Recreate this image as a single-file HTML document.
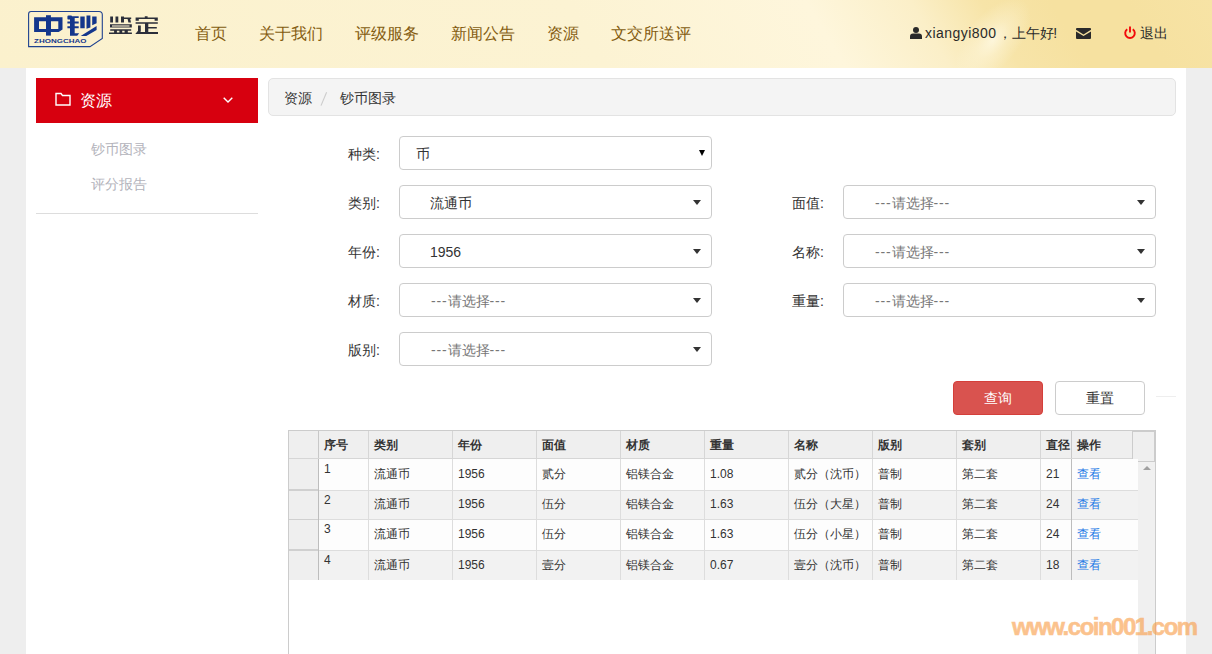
<!DOCTYPE html>

<html><head><meta charset="utf-8"/>
<style>
*{box-sizing:border-box;margin:0;padding:0}
html,body{width:1212px;height:654px;overflow:hidden}
body{background:#eeeeee;font-family:"Liberation Sans",sans-serif;color:#333;position:relative;font-size:14px}
.abs{position:absolute;white-space:nowrap}
body div,body span{white-space:nowrap}
#hdr{position:absolute;left:0;top:0;width:1212px;height:68px;overflow:hidden;
 background:linear-gradient(59deg,#fbf1cd 0px,#fcf3d3 520px,#fef6dc 725px,#fbefc8 815px,#f7e4a8 875px,#f6e1a0 935px,#f6e1a0 1000px,#f7e3a5 1074px)}
#glow{position:absolute;left:933px;top:-15px;width:120px;height:110px;transform:rotate(-50deg);
 background:radial-gradient(ellipse 50px 26px at 60px 55px, rgba(255,250,230,.8), rgba(255,250,230,.35) 45%, rgba(255,250,230,0))}
#wrap{position:absolute;left:26px;top:68px;width:1160px;height:586px;background:#fff}
.nav{position:absolute;top:23px;font-size:16px;color:#845c10;line-height:22px}
#side{position:absolute;left:36px;top:78px;width:222px;height:45px;background:#d7000f}
.sub{position:absolute;left:91px;font-size:14px;color:#b3b3bb;line-height:20px}
#bc{position:absolute;left:268px;top:78px;width:908px;height:38px;background:#f4f4f4;border:1px solid #e3e3e3;border-radius:5px}
.lbl{position:absolute;font-size:14px;color:#333;line-height:20px}
.sel{position:absolute;width:313px;height:34px;border:1px solid #ccc;border-radius:4px;background:#fff}
.sel span{position:absolute;left:30px;top:7px;font-size:14px;line-height:20px;color:#333}
.sel span.ph{color:#777}
.sel span.ph{letter-spacing:0}
.sel i{position:absolute;right:10px;top:14px;width:0;height:0;border-left:4px solid transparent;border-right:4px solid transparent;border-top:5px solid #333}
.btn{position:absolute;top:381px;width:90px;height:34px;border-radius:4px;font-size:14px;text-align:center;line-height:33px}
#grid{position:absolute;left:288px;top:430px;width:868px;height:230px;border:1px solid #ccc;border-bottom:none;background:#fff}
.hc{position:absolute;top:0;height:28px;background:#efefef;border-right:1px solid #d3d3d3;border-bottom:1px solid #d3d3d3;font-weight:bold;font-size:12px;line-height:18px;padding:9px 0 0 5px}
.row{position:absolute;left:0;width:849px}
.hd{font-size:12px;font-weight:bold;line-height:18px;color:#333}
.td{font-size:12px;line-height:18px;color:#333}
.lk{color:#1e7ae6}
.c{position:absolute;top:0;height:100%;border-right:1px solid #ddd;border-bottom:1px solid #ddd;font-size:12px;padding-left:6px}
</style></head><body>
<div id="hdr">
<div id="glow"></div>
<!-- logo -->
<svg class="abs" height="55" style="left:0;top:0" viewbox="0 0 170 55" width="170">
<path d="M31 11.5 H99 Q102.3 11.5 102.3 14.8 V38.4 L90 46.6 H28.6 V13.9 Q28.6 11.5 31 11.5 Z" fill="none" stroke="#1f4290" stroke-width="1.1"></path>
<path d="M34.1 17.3H62.5V29.4L58.7 32.1H34.1ZM39 21.2H46V29H39ZM50.9 21.2H58.3V29H50.9Z" fill="#14378c" fill-rule="evenodd"></path><path d="M46 15.2H50.9V35.6H46Z" fill="#14378c"></path>
<path d="M67.4 16.6 Q67.4 15.4 68.6 15.4 H71 Q72 15.4 72 16.2 H78.7 V18 H72 V18.8 Q72 19.6 71 19.6 H68.6 Q67.4 19.6 67.4 18.4ZM67.4 21.5H78.7V23.5H67.4ZM67.4 26.3H78.7V28.3H67.4ZM70 18H74.7V35.7H70ZM74.7 33.2 H79.2 L77.2 35.7 H74.7ZM80.3 16.4H84.7V28.3H80.3ZM86.5 15.4 H90.4 V27.6 L86.5 28.7ZM92.2 16.4 H96.6 V23.3 L92.2 25.2ZM96.6 25.9 V29.9 L86.3 35.9 H80.7Z" fill="#14378c"></path>
<text fill="#14378c" font-family="Liberation Sans" font-size="5.6" font-weight="bold" lengthadjust="spacingAndGlyphs" textlength="52.3" x="34.1" y="42.8">ZHONGCHAO</text>
<path d="M110.2 16.6H113V22.4H110.2ZM115.5 16.6H118.3V22.4H115.5ZM121 16.4 H124 V17.5 H131.2 V19 H124 V22.4 H121ZM127.6 19 H130.2 L131 22.4 H128.4ZM110 24.3H131.8V27.5H110ZM110.2 29.3H131.2V30.8H110.2ZM114.1 30.8H116.9V32.8H114.1ZM119.4 30.8H122.2V32.8H119.4ZM124.6 30.8H127.8V32.8H124.6ZM109 32.6H131.9V34H109Z" fill="#2b2e3a"></path><path d="M112 25.4H129.5V26.6H112Z" fill="#f0e6c8"></path>
<path d="M144.8 16.2H147.6V17.8H144.8ZM135.6 17.5H157.8V19H135.6ZM135.6 17.5H138.8V20.8H135.6ZM154.6 17.5H157.8V20.8H154.6ZM135.6 22.2H157.8V23.8H135.6ZM145 23.8H148.3V33.5H145ZM148.3 27H156.8V28.6H148.3ZM138 25.4 H140.8 V31.4 L138 34 H135.3 L138 30.8ZM138.4 32.1H158V34H138.4Z" fill="#2b2e3a"></path>
</svg>
<div class="nav" style="left:195px;width:32.00px;text-align-last:justify">首页</div>
<div class="nav" style="left:259px;width:64.00px;text-align-last:justify">关于我们</div>
<div class="nav" style="left:355px;width:64.00px;text-align-last:justify">评级服务</div>
<div class="nav" style="left:451px;width:64.00px;text-align-last:justify">新闻公告</div>
<div class="nav" style="left:547px;width:32.00px;text-align-last:justify">资源</div>
<div class="nav" style="left:611px;width:80.00px;text-align-last:justify">文交所送评</div>
<svg class="abs" height="12" style="left:910px;top:27px" viewbox="0 0 12 12" width="12"><circle cx="6" cy="3" fill="#2a2a2a" r="3"></circle><path d="M0 12 V9.5 Q0 6.5 3 6.5 H9 Q12 6.5 12 9.5 V12 Z" fill="#2a2a2a"></path></svg>
<div class="abs" style="left:925px;top:23px;font-size:14px;line-height:20px;color:#2a2a2a;letter-spacing:.45px">xiangyi800</div>
<div class="abs" style="left:997.5px;top:23px;font-size:14px;line-height:20px;color:#2a2a2a;width:56.00px;text-align-last:justify">，上午好</div>
<div class="abs" style="left:1053.3px;top:23px;font-size:14px;line-height:20px;color:#2a2a2a">!</div>
<svg class="abs" height="11" style="left:1076px;top:28px" viewbox="0 0 15 11" width="15"><path d="M0 1 Q0 0 1 0 H14 Q15 0 15 1 V1.8 L7.5 6.5 L0 1.8 Z" fill="#2a2a2a"></path><path d="M0 3.5 L7.5 8 L15 3.5 V10 Q15 11 14 11 H1 Q0 11 0 10 Z" fill="#2a2a2a"></path></svg>
<svg class="abs" height="13" style="left:1124px;top:26px" viewbox="0 0 12 13" width="12"><path d="M3.2 3.3 A4.8 4.8 0 1 0 8.8 3.3" fill="none" stroke="#f20a0a" stroke-width="1.9"></path><path d="M6 0.5 V6.5" stroke="#f20a0a" stroke-width="1.9"></path></svg>
<div class="abs" style="left:1140px;top:23px;font-size:14px;line-height:20px;color:#2a2a2a;width:28.00px;text-align-last:justify">退出</div>
</div>
<div id="wrap"></div>
<div id="side">
<svg class="abs" height="14" style="left:19px;top:14px" viewbox="0 0 16 14" width="16"><path d="M1 1.5 H6 L7.5 3.5 H15 V13 H1 Z" fill="none" stroke="#fff" stroke-width="1.4"></path></svg>
<div class="abs" style="left:44px;top:12px;font-size:16px;color:#fff;line-height:22px;width:32.00px;text-align-last:justify">资源</div>
<svg class="abs" height="6" style="left:187px;top:19px" viewbox="0 0 10 6" width="10"><path d="M0.7 0.7 L5 5 L9.3 0.7" fill="none" stroke="#fff" stroke-width="1.4"></path></svg>
</div>
<div class="sub" style="top:139px;width:56.00px;text-align-last:justify">钞币图录</div>
<div class="sub" style="top:174px;width:56.00px;text-align-last:justify">评分报告</div>
<div class="abs" style="left:36px;top:213px;width:222px;height:1px;background:#ddd"></div>
<div id="bc">
<div class="abs" style="left:15px;top:9px;font-size:14px;line-height:20px;color:#333;width:28.00px;text-align-last:justify">资源</div>
<svg class="abs" height="16" style="left:49px;top:12px" viewbox="0 0 12 16" width="12"><path d="M8.6 1.2 L3 14.6" stroke="#ccc" stroke-width="1.1"></path></svg>
<div class="abs" style="left:71px;top:9px;font-size:14px;line-height:20px;color:#333;width:56.00px;text-align-last:justify">钞币图录</div>
</div>
<!-- form -->
<div class="lbl" style="left:348px;top:144px;width:31.89px;text-align-last:justify">种类:</div>
<div class="sel" style="left:399px;top:136px"><span style="left:16px;width:14.00px;text-align-last:justify">币</span><i style="right:6px;top:13px;border-left-width:3px;border-right-width:3px;border-top-width:6px;border-top-color:#000"></i></div>
<div class="lbl" style="left:348px;top:193px;width:31.89px;text-align-last:justify">类别:</div>
<div class="sel" style="left:399px;top:185px"><span style="width:42.00px;text-align-last:justify">流通币</span><i></i></div>
<div class="lbl" style="left:348px;top:242px;width:31.89px;text-align-last:justify">年份:</div>
<div class="sel" style="left:399px;top:234px"><span>1956</span><i></i></div>
<div class="lbl" style="left:348px;top:291px;width:31.89px;text-align-last:justify">材质:</div>
<div class="sel" style="left:399px;top:283px"><span class="ph" style="left:31px;letter-spacing:.8px">---</span><span class="ph" style="left:48px;width:42.00px;text-align-last:justify">请选择</span><span class="ph" style="left:89.5px;letter-spacing:.8px">---</span><i></i></div>
<div class="lbl" style="left:348px;top:340px;width:31.89px;text-align-last:justify">版别:</div>
<div class="sel" style="left:399px;top:332px"><span class="ph" style="left:31px;letter-spacing:.8px">---</span><span class="ph" style="left:48px;width:42.00px;text-align-last:justify">请选择</span><span class="ph" style="left:89.5px;letter-spacing:.8px">---</span><i></i></div>
<div class="lbl" style="left:792px;top:193px;width:31.89px;text-align-last:justify">面值:</div>
<div class="sel" style="left:843px;top:185px"><span class="ph" style="left:31px;letter-spacing:.8px">---</span><span class="ph" style="left:48px;width:42.00px;text-align-last:justify">请选择</span><span class="ph" style="left:89.5px;letter-spacing:.8px">---</span><i></i></div>
<div class="lbl" style="left:792px;top:242px;width:31.89px;text-align-last:justify">名称:</div>
<div class="sel" style="left:843px;top:234px"><span class="ph" style="left:31px;letter-spacing:.8px">---</span><span class="ph" style="left:48px;width:42.00px;text-align-last:justify">请选择</span><span class="ph" style="left:89.5px;letter-spacing:.8px">---</span><i></i></div>
<div class="lbl" style="left:792px;top:291px;width:31.89px;text-align-last:justify">重量:</div>
<div class="sel" style="left:843px;top:283px"><span class="ph" style="left:31px;letter-spacing:.8px">---</span><span class="ph" style="left:48px;width:42.00px;text-align-last:justify">请选择</span><span class="ph" style="left:89.5px;letter-spacing:.8px">---</span><i></i></div>
<div class="btn" style="left:953px;background:#d9534f;border:1px solid #d43f3a;color:#fff">查询</div>
<div class="btn" style="left:1055px;background:#fff;border:1px solid #ccc;color:#333">重置</div>
<div class="abs" style="left:1156px;top:396px;width:20px;height:1px;background:#eee"></div>
<!-- grid start -->
<div class="abs" style="left:288px;top:430px;width:868px;height:240px;border:1px solid #ccc;border-bottom:none;background:#fff"></div>
<div class="abs" style="left:289px;top:431px;width:843px;height:27px;background:#efefef"></div>
<div class="abs" style="left:289px;top:458px;width:843px;height:1px;background:#d6d6d6"></div>
<div class="abs" style="left:318px;top:431px;width:1px;height:27px;background:#c8c8c8"></div>
<div class="abs" style="left:368px;top:431px;width:1px;height:27px;background:#d6d6d6"></div>
<div class="abs" style="left:452px;top:431px;width:1px;height:27px;background:#d6d6d6"></div>
<div class="abs" style="left:536px;top:431px;width:1px;height:27px;background:#d6d6d6"></div>
<div class="abs" style="left:620px;top:431px;width:1px;height:27px;background:#d6d6d6"></div>
<div class="abs" style="left:704px;top:431px;width:1px;height:27px;background:#d6d6d6"></div>
<div class="abs" style="left:788px;top:431px;width:1px;height:27px;background:#d6d6d6"></div>
<div class="abs" style="left:872px;top:431px;width:1px;height:27px;background:#d6d6d6"></div>
<div class="abs" style="left:956px;top:431px;width:1px;height:27px;background:#d6d6d6"></div>
<div class="abs" style="left:1040px;top:431px;width:1px;height:27px;background:#d6d6d6"></div>
<div class="abs" style="left:1071px;top:431px;width:1px;height:27px;background:#c8c8c8"></div>
<div class="abs hd" style="left:324px;top:436px;width:24.00px;text-align-last:justify">序号</div>
<div class="abs hd" style="left:374px;top:436px;width:24.00px;text-align-last:justify">类别</div>
<div class="abs hd" style="left:458px;top:436px;width:24.00px;text-align-last:justify">年份</div>
<div class="abs hd" style="left:542px;top:436px;width:24.00px;text-align-last:justify">面值</div>
<div class="abs hd" style="left:626px;top:436px;width:24.00px;text-align-last:justify">材质</div>
<div class="abs hd" style="left:710px;top:436px;width:24.00px;text-align-last:justify">重量</div>
<div class="abs hd" style="left:794px;top:436px;width:24.00px;text-align-last:justify">名称</div>
<div class="abs hd" style="left:878px;top:436px;width:24.00px;text-align-last:justify">版别</div>
<div class="abs hd" style="left:962px;top:436px;width:24.00px;text-align-last:justify">套别</div>
<div class="abs hd" style="left:1046px;top:436px;width:24.00px;text-align-last:justify">直径</div>
<div class="abs hd" style="left:1077px;top:436px;width:24.00px;text-align-last:justify">操作</div>
<div class="abs" style="left:1132px;top:431px;width:23px;height:31px;background:#efefef;border:1px solid #ccc"></div>
<div class="abs" style="left:1138px;top:462px;width:17px;height:200px;background:#f0f0f0"></div>
<div class="abs" style="left:1142.5px;top:466px;width:0;height:0;border-left:4px solid transparent;border-right:4px solid transparent;border-bottom:4.5px solid #a0a0a0"></div>
<div class="abs" style="left:319px;top:459px;width:819px;height:31px;background:#fdfdfd"></div>
<div class="abs" style="left:289px;top:459px;width:29px;height:31px;background:#efefef"></div>
<div class="abs" style="left:289px;top:489px;width:29px;height:2px;background:#d0d0d0"></div>
<div class="abs" style="left:319px;top:490px;width:819px;height:1px;background:#ddd"></div>
<div class="abs" style="left:318px;top:459px;width:1px;height:32px;background:#bdbdbd"></div>
<div class="abs" style="left:368px;top:459px;width:1px;height:32px;background:#ddd"></div>
<div class="abs" style="left:452px;top:459px;width:1px;height:32px;background:#ddd"></div>
<div class="abs" style="left:536px;top:459px;width:1px;height:32px;background:#ddd"></div>
<div class="abs" style="left:620px;top:459px;width:1px;height:32px;background:#ddd"></div>
<div class="abs" style="left:704px;top:459px;width:1px;height:32px;background:#ddd"></div>
<div class="abs" style="left:788px;top:459px;width:1px;height:32px;background:#ddd"></div>
<div class="abs" style="left:872px;top:459px;width:1px;height:32px;background:#ddd"></div>
<div class="abs" style="left:956px;top:459px;width:1px;height:32px;background:#ddd"></div>
<div class="abs" style="left:1040px;top:459px;width:1px;height:32px;background:#ddd"></div>
<div class="abs" style="left:1071px;top:459px;width:1px;height:32px;background:#bdbdbd"></div>
<div class="abs td" style="left:324px;top:460px">1</div>
<div class="abs td" style="left:374px;top:465px;width:36.00px;text-align-last:justify">流通币</div>
<div class="abs td" style="left:458px;top:465px">1956</div>
<div class="abs td" style="left:542px;top:465px;width:24.00px;text-align-last:justify">贰分</div>
<div class="abs td" style="left:626px;top:465px;width:48.00px;text-align-last:justify">铝镁合金</div>
<div class="abs td" style="left:710px;top:465px">1.08</div>
<div class="abs td" style="left:794px;top:465px;width:72.00px;text-align-last:justify">贰分（沈币）</div>
<div class="abs td" style="left:878px;top:465px;width:24.00px;text-align-last:justify">普制</div>
<div class="abs td" style="left:962px;top:465px;width:36.00px;text-align-last:justify">第二套</div>
<div class="abs td" style="left:1046px;top:465px">21</div>
<div class="abs td lk" style="left:1077px;top:465px;width:24.00px;text-align-last:justify">查看</div>
<div class="abs" style="left:319px;top:491px;width:819px;height:28px;background:#f2f2f2"></div>
<div class="abs" style="left:289px;top:491px;width:29px;height:28px;background:#efefef"></div>
<div class="abs" style="left:289px;top:519px;width:29px;height:1px;background:#d0d0d0"></div>
<div class="abs" style="left:319px;top:519px;width:819px;height:1px;background:#ddd"></div>
<div class="abs" style="left:318px;top:491px;width:1px;height:29px;background:#bdbdbd"></div>
<div class="abs" style="left:368px;top:491px;width:1px;height:29px;background:#ddd"></div>
<div class="abs" style="left:452px;top:491px;width:1px;height:29px;background:#ddd"></div>
<div class="abs" style="left:536px;top:491px;width:1px;height:29px;background:#ddd"></div>
<div class="abs" style="left:620px;top:491px;width:1px;height:29px;background:#ddd"></div>
<div class="abs" style="left:704px;top:491px;width:1px;height:29px;background:#ddd"></div>
<div class="abs" style="left:788px;top:491px;width:1px;height:29px;background:#ddd"></div>
<div class="abs" style="left:872px;top:491px;width:1px;height:29px;background:#ddd"></div>
<div class="abs" style="left:956px;top:491px;width:1px;height:29px;background:#ddd"></div>
<div class="abs" style="left:1040px;top:491px;width:1px;height:29px;background:#ddd"></div>
<div class="abs" style="left:1071px;top:491px;width:1px;height:29px;background:#bdbdbd"></div>
<div class="abs td" style="left:324px;top:491px">2</div>
<div class="abs td" style="left:374px;top:495px;width:36.00px;text-align-last:justify">流通币</div>
<div class="abs td" style="left:458px;top:495px">1956</div>
<div class="abs td" style="left:542px;top:495px;width:24.00px;text-align-last:justify">伍分</div>
<div class="abs td" style="left:626px;top:495px;width:48.00px;text-align-last:justify">铝镁合金</div>
<div class="abs td" style="left:710px;top:495px">1.63</div>
<div class="abs td" style="left:794px;top:495px;width:72.00px;text-align-last:justify">伍分（大星）</div>
<div class="abs td" style="left:878px;top:495px;width:24.00px;text-align-last:justify">普制</div>
<div class="abs td" style="left:962px;top:495px;width:36.00px;text-align-last:justify">第二套</div>
<div class="abs td" style="left:1046px;top:495px">24</div>
<div class="abs td lk" style="left:1077px;top:495px;width:24.00px;text-align-last:justify">查看</div>
<div class="abs" style="left:319px;top:520px;width:819px;height:30px;background:#fdfdfd"></div>
<div class="abs" style="left:289px;top:520px;width:29px;height:30px;background:#efefef"></div>
<div class="abs" style="left:289px;top:549px;width:29px;height:2px;background:#d0d0d0"></div>
<div class="abs" style="left:319px;top:550px;width:819px;height:1px;background:#ddd"></div>
<div class="abs" style="left:318px;top:520px;width:1px;height:31px;background:#bdbdbd"></div>
<div class="abs" style="left:368px;top:520px;width:1px;height:31px;background:#ddd"></div>
<div class="abs" style="left:452px;top:520px;width:1px;height:31px;background:#ddd"></div>
<div class="abs" style="left:536px;top:520px;width:1px;height:31px;background:#ddd"></div>
<div class="abs" style="left:620px;top:520px;width:1px;height:31px;background:#ddd"></div>
<div class="abs" style="left:704px;top:520px;width:1px;height:31px;background:#ddd"></div>
<div class="abs" style="left:788px;top:520px;width:1px;height:31px;background:#ddd"></div>
<div class="abs" style="left:872px;top:520px;width:1px;height:31px;background:#ddd"></div>
<div class="abs" style="left:956px;top:520px;width:1px;height:31px;background:#ddd"></div>
<div class="abs" style="left:1040px;top:520px;width:1px;height:31px;background:#ddd"></div>
<div class="abs" style="left:1071px;top:520px;width:1px;height:31px;background:#bdbdbd"></div>
<div class="abs td" style="left:324px;top:520px">3</div>
<div class="abs td" style="left:374px;top:525px;width:36.00px;text-align-last:justify">流通币</div>
<div class="abs td" style="left:458px;top:525px">1956</div>
<div class="abs td" style="left:542px;top:525px;width:24.00px;text-align-last:justify">伍分</div>
<div class="abs td" style="left:626px;top:525px;width:48.00px;text-align-last:justify">铝镁合金</div>
<div class="abs td" style="left:710px;top:525px">1.63</div>
<div class="abs td" style="left:794px;top:525px;width:72.00px;text-align-last:justify">伍分（小星）</div>
<div class="abs td" style="left:878px;top:525px;width:24.00px;text-align-last:justify">普制</div>
<div class="abs td" style="left:962px;top:525px;width:36.00px;text-align-last:justify">第二套</div>
<div class="abs td" style="left:1046px;top:525px">24</div>
<div class="abs td lk" style="left:1077px;top:525px;width:24.00px;text-align-last:justify">查看</div>
<div class="abs" style="left:319px;top:551px;width:819px;height:29px;background:#f2f2f2"></div>
<div class="abs" style="left:289px;top:551px;width:29px;height:29px;background:#efefef"></div>
<div class="abs" style="left:318px;top:551px;width:1px;height:29px;background:#bdbdbd"></div>
<div class="abs" style="left:368px;top:551px;width:1px;height:29px;background:#ddd"></div>
<div class="abs" style="left:452px;top:551px;width:1px;height:29px;background:#ddd"></div>
<div class="abs" style="left:536px;top:551px;width:1px;height:29px;background:#ddd"></div>
<div class="abs" style="left:620px;top:551px;width:1px;height:29px;background:#ddd"></div>
<div class="abs" style="left:704px;top:551px;width:1px;height:29px;background:#ddd"></div>
<div class="abs" style="left:788px;top:551px;width:1px;height:29px;background:#ddd"></div>
<div class="abs" style="left:872px;top:551px;width:1px;height:29px;background:#ddd"></div>
<div class="abs" style="left:956px;top:551px;width:1px;height:29px;background:#ddd"></div>
<div class="abs" style="left:1040px;top:551px;width:1px;height:29px;background:#ddd"></div>
<div class="abs" style="left:1071px;top:551px;width:1px;height:29px;background:#bdbdbd"></div>
<div class="abs td" style="left:324px;top:551px">4</div>
<div class="abs td" style="left:374px;top:556px;width:36.00px;text-align-last:justify">流通币</div>
<div class="abs td" style="left:458px;top:556px">1956</div>
<div class="abs td" style="left:542px;top:556px;width:24.00px;text-align-last:justify">壹分</div>
<div class="abs td" style="left:626px;top:556px;width:48.00px;text-align-last:justify">铝镁合金</div>
<div class="abs td" style="left:710px;top:556px">0.67</div>
<div class="abs td" style="left:794px;top:556px;width:72.00px;text-align-last:justify">壹分（沈币）</div>
<div class="abs td" style="left:878px;top:556px;width:24.00px;text-align-last:justify">普制</div>
<div class="abs td" style="left:962px;top:556px;width:36.00px;text-align-last:justify">第二套</div>
<div class="abs td" style="left:1046px;top:556px">18</div>
<div class="abs td lk" style="left:1077px;top:556px;width:24.00px;text-align-last:justify">查看</div>
<!-- grid end -->
<div class="abs" style="left:1012px;top:612px;font-size:24px;font-weight:bold;color:#f99a42;-webkit-text-stroke:.6px #f99a42;opacity:.6;letter-spacing:-1.5px;line-height:30px">www.coin001.com</div>
</body></html>
